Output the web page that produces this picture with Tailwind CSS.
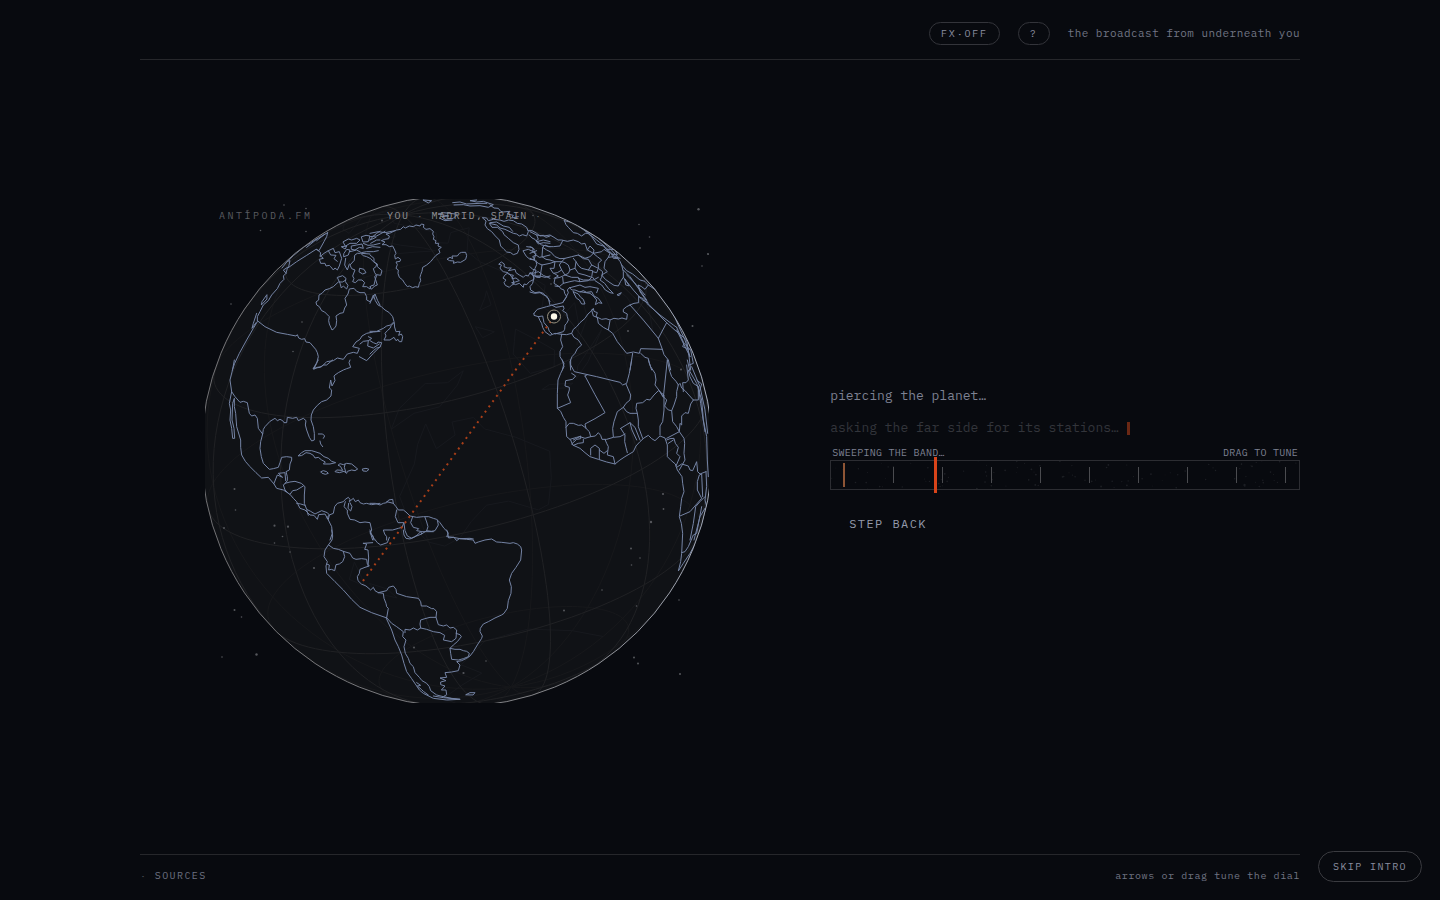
<!DOCTYPE html>
<html lang="en">
<head>
<meta charset="utf-8">
<meta name="viewport" content="width=device-width, initial-scale=1">
<title>Antípoda.fm</title>
<script src="https://cdn.jsdelivr.net/npm/@tailwindcss/browser@4"></script>
</head>
<body class="flex min-h-screen flex-col bg-[#080a0f] font-['IBM_Plex_Mono','Liberation_Mono',monospace] text-[#7d8192]">
<header class="mx-auto flex w-full max-w-[1160px] items-center justify-end gap-[18px] border-b border-[#26272b] pt-[22px] pb-[14px]">
  <button type="button" class="rounded-full border border-[#33343a] px-[11px] text-[10px] leading-[21px] tracking-[0.18em] text-[#8b8fa0]">FX·OFF</button>
  <button type="button" aria-label="Help" class="rounded-full border border-[#33343a] px-[11px] text-[10px] leading-[21px] tracking-[0.18em] text-[#8b8fa0]">?</button>
  <p class="pb-0.5 text-[11px] leading-4 tracking-[0.04em] text-[#717584]">the broadcast from underneath you</p>
</header>

<main class="mx-auto grid w-full max-w-[1160px] flex-1 grid-cols-[1.35fr_1fr] items-center gap-14 pb-3">
  <section class="relative mx-auto w-full max-w-[504px]" aria-label="Globe">
    <svg viewBox="205 199 504 504" class="block w-full" fill="none" role="img" aria-label="Line through the planet from Madrid">
      <defs>
        <linearGradient id="rim" x1="0" y1="0.6" x2="1" y2="0.4">
          <stop offset="0" stop-color="#707073"/><stop offset="0.6" stop-color="#85868a"/><stop offset="1" stop-color="#a9b0c0"/>
        </linearGradient>
        <clipPath id="disc"><circle cx="457" cy="451" r="255.5"/></clipPath>
      </defs>
      <circle cx="457" cy="451" r="255.5" fill="#101216"/>
      <path id="far-grid" stroke="#17181b" stroke-width="1"/>
      <path id="far-land" stroke="#17191e" stroke-width="1" stroke-linejoin="round"/>
      <path id="near-grid" stroke="#202124" stroke-width="1"/>
      <g clip-path="url(#disc)">
      <g stroke="#7585a6" stroke-width="3" stroke-linejoin="round" stroke-linecap="round">
        <!-- north-west: Alaska, Canada, Hudson Bay -->
        <g transform="translate(200 190) scale(.33333)">
          <path d="M383 128 345 150 310 172 280 197 262 214 246 234M383 128 380 140 372 155 357 182 348 178 320 196 290 215 262 235 258 250 250 258 252 268 240 280 232 296 215 315 205 332 190 345 180 365 172 380 172 395 160 415 140 450 118 490 104 520 97 540M262 214 270 212 266 230 250 240 258 250M350 152 375 132M320 172 352 146M200 315 186 335 184 345 200 328ZM170 370 160 400 156 415 168 398"/>
          <path d="M172 392 195 410 230 427 262 433 288 438 292 434 296 444 305 448 314 446 318 456 330 458 347 478 352 488 355 500 350 520 341 538 352 532 365 530 380 515 400 512 412 504 430 508 442 492 460 487 472 490 478 475 458 470 468 456 480 448 486 438 500 430 520 426 540 424M480 462 490 454 505 452 515 445 505 440M505 452 503 468 520 474 538 462M540 470 520 490 500 512 478 500"/>
          <path d="M437 270 428 276 415 276 400 290 388 296 375 300 366 310 357 315 356 330 348 336 350 345 358 350 365 362 374 366 380 372 388 380 386 392 388 402 396 420 402 416 408 408 410 392 408 378 420 370 430 368 434 354 440 345 435 325 444 312 448 297 462 295 470 304 480 308 494 308 500 320 500 330 510 335 518 326 525 312 533 332 540 345"/>
          <path d="M465 195 472 190 482 190 490 197 500 200 512 206 520 215 530 222 528 230 520 236 524 248 530 256 526 268 522 285 512 288 510 297 500 290 488 290 494 278 486 270 475 270 466 278 458 275 462 266 458 258 465 240 455 236 450 225 462 212ZM480 235 492 238 498 248 488 252 478 246Z"/>
          <path d="M350 178 362 188 360 200 372 190 385 182 400 175 405 188 418 185 425 205 418 228 412 240 405 234 400 240 392 230 388 226 378 228 375 220 362 220 358 208 370 205 362 198M385 182 392 195 408 196 402 206 412 214M413 262 428 257 438 265 436 275 444 286 440 297 430 288 424 294 420 280ZM432 200 445 195 450 180 440 178 432 190ZM437 205 434 225 442 240 448 222"/>
          <path d="M430 155 445 147 455 150 470 145 480 150 470 160 450 160 437 168ZM455 168 470 165 486 162 490 175 478 172 465 180 455 178ZM485 140 498 136 510 138 505 155 490 156ZM510 150 518 140 530 130 540 124M512 160 530 150 540 150M490 160 504 166 520 165 540 160M450 185 470 180 484 188 500 185 520 185 535 182M500 175 518 170 540 172M485 190 510 192M425 170 440 168 436 176Z"/>
        </g>
        <!-- north Atlantic -->
        <g transform="translate(370 190) scale(.33333)">
          <path d="M80 120 92 118 100 110 106 114 118 108 130 110 138 105 150 108 154 102 162 104 160 112 168 118 180 116 190 124 188 132 192 140 190 148 198 152 196 160 206 160 204 168 214 172 206 178 210 188 198 196 190 205 182 215 170 225 158 232 156 244 152 254 150 262 152 272 148 280 145 292 136 290 128 293 118 288 112 290 104 280 98 270 88 262 84 250 85 240 78 235 82 224 78 216 90 214 92 208 84 202 76 207 74 196 78 190 74 180 68 168 58 170 48 164 36 164 45 156 34 152 44 148 56 146 58 138 48 132 58 130Z"/>
          <path d="M232 207 240 202 248 206 246 198 262 198 268 190 275 187 287 187 290 197 287 208 272 217 262 216 250 220 252 213 240 212ZM205 72 220 68 240 70 262 73 250 85 225 88 215 80 235 78ZM160 30 185 32 176 38ZM208 84 225 92 246 90M248 38 270 36 290 42 330 40 350 40M252 45 280 44 300 48 330 47 355 52 370 44 340 34 320 36 300 32 320 30M360 45 372 54 385 55 392 64 400 66 420 64 412 72 430 76 425 84 445 80"/>
          <path d="M338 83 350 84 355 92 370 88 390 90 402 94 416 90 430 92 442 100 455 102 470 112 475 125 470 138 458 134 448 138 440 132 430 130 405 118 390 114 380 105 358 100 366 112 382 112 398 125 402 134 415 145 430 158 445 165 447 178 442 190 430 194 422 188 410 186 402 178 392 168 388 150 376 138 365 125 352 116 345 105 348 94ZM360 98 380 96 400 108 418 112 428 124M475 122 486 122 500 130 510 138 520 136 528 142 540 138M478 135 486 144 495 148 505 162 520 158 540 160M500 155 520 150 540 155"/>
          <path d="M460 182 475 178 490 185 498 195 488 200 495 210 480 208 470 200ZM498 195 508 202 520 200 540 195M470 170 485 172 494 180M387 222 394 216 403 222 402 230 412 234 424 234 415 242 435 238 438 248 448 255 460 262 466 256 475 258 480 248 488 250 492 268 478 275 470 284 462 282 460 292 448 280 436 284 425 278 436 276 448 272 438 264 426 266 430 256 420 254 414 248 400 245 394 240 390 234 394 226ZM405 255 412 250 420 254 428 265 430 272 432 282 424 286 418 292 406 286 402 278 408 270 400 265Z"/>
          <path d="M498 212 500 224 495 235 490 244 485 250 492 262 488 280 480 290 482 300 495 308 508 306 520 310 528 320 535 325 540 345M496 258 510 258 525 262 540 258M488 250 505 245 520 256 540 265M0 340 10 315 16 332 24 345 34 350 45 360 58 368 68 380 72 395 62 405 50 408 40 415 20 424 0 424M72 398 64 406 60 415 52 422 45 430 48 438 42 450 60 450 72 442 78 452 84 448 88 455 95 455 98 440 94 432 86 436 90 424 78 425 74 412ZM0 452 10 458 20 462 24 456 35 458 30 472 20 474 10 482 0 492M0 195 12 205 12 216 22 222 22 230 36 242 32 256 20 254 14 260 22 285 14 288 4 298 0 290M0 130 25 125 45 128 75 122M0 140 20 138 45 124M0 150 18 142"/>
        </g>
        <!-- Europe, Middle East -->
        <g transform="translate(530 190) scale(.33333)">
          <path d="M12 370 22 358 50 350 65 346 98 338 110 320 104 310 102 300 92 296 88 290 75 288M12 370 12 376 25 380 30 392 35 400 38 412 45 425 60 436 75 430 95 433M65 345 78 352 90 350 100 348 102 356 98 362 110 370 112 380 115 390 110 400 105 405 104 418 100 425 75 432M25 380 38 378 42 398 54 412 58 424 66 432M0 306 14 310 30 308 40 314 50 318 60 335"/>
          <path d="M0 125 20 135 42 138 60 135 72 142 84 150 95 150 112 154 130 150 145 155 155 162 165 160 172 180 190 190 180 200 165 205 145 195 125 200 105 205 90 206 75 200 62 186 50 180 38 172 45 165 55 170 70 170 90 168 98 152M20 135 25 148 18 152 35 165 60 170M38 172 36 200 48 208 60 210 75 215 95 215 105 205M0 170 10 175 8 184 18 190 12 210 0 205M12 210 25 220 36 225 60 220 75 215 72 235 60 235 70 250 82 248 95 240 88 225 95 215M95 240 105 255 115 250 120 240 115 225 105 218 95 215M105 255 90 262 75 265 72 280 88 290 100 280 98 262M105 255 125 262 145 262 150 275 134 272 120 275 100 280M120 240 135 235 138 215 130 205M138 215 146 228 155 235 175 240 185 225 175 208 160 206 145 195M135 235 145 250 165 255 185 262 175 272 150 275M185 262 188 242 175 240M185 225 205 235 200 248 188 245M145 265 160 270 190 270 205 262M0 230 8 238 18 240 14 258 30 262 36 225M0 190 20 182M0 250 20 262 30 262M72 265 85 258 72 250"/>
          <path d="M103 92 108 104 115 112 130 128 142 130 155 138 166 130 175 130 200 150 225 170 255 200 270 205M103 92 130 98 165 122 200 140 240 175 262 200M165 122 185 140 200 162 220 168 235 185 250 195M170 118 215 145 240 165M172 180 180 168 192 180 190 190 215 185 222 178 240 190 235 202 250 200 262 205 270 214 275 225 280 245 280 262 272 274 265 288 252 286 240 278 226 268 215 255 232 245 222 235 225 215 235 202M190 190 202 200 215 210 205 220 205 235 218 245 215 262 210 270 224 280 235 295 250 310 240 308 226 300 215 285 195 272 188 262M262 314 274 308 268 316ZM232 178 255 178 262 195 245 192 250 205 265 205"/>
          <path d="M118 293 126 300 135 300 150 306 160 302 170 307 185 305 192 318 205 325 216 340 206 338 196 344 200 330 190 318 180 310 150 305M118 293 112 300 115 308 108 322 98 338M130 305 145 312 152 322 160 328 165 342 155 342 148 330 140 325ZM120 293 150 285 165 292 180 290 205 295 200 308M285 268 298 288 288 285ZM275 225 290 242 308 252 330 270 345 274 355 285 345 298 335 290 325 285 330 305 355 340 335 328 310 300 280 262M280 240 300 260 350 330M290 255 320 285 345 315"/>
          <path d="M326 320 340 326 355 345 390 375 430 405 440 412M300 345 312 340 326 338 326 320M355 285 385 305 420 345 440 395 465 450 480 500"/>
          <path d="M95 433 110 434 125 430 130 418 140 410 150 398 165 385 174 372 185 362 190 355 192 364 202 368 198 380 215 388 228 386 240 390 252 385 265 387 276 384 290 388 292 372 280 366 280 358 290 350 300 345M300 345 340 390 385 445 410 398 355 342M385 445 397 478 332 476 328 490 310 486 290 490 262 455 248 430 235 420 240 392M185 360 190 378 202 382 205 400 220 412 235 420M308 490 300 540M332 490 345 502 355 505 358 520 365 540M397 478 402 494 415 510 422 540M125 430 132 442 145 450 155 465 142 476 135 490 126 500 120 515 122 540M95 433 92 450 98 470 90 484 90 500 102 520 97 540M410 398 440 425 470 450 476 490 482 540M440 412 462 460 458 470 478 478M440 420 480 500M462 460 482 480 490 520 478 525"/>
        </g>
        <!-- North and Central America, Caribbean -->
        <g transform="translate(200 360) scale(.33333)">
          <path d="M103 0 98 28 90 60 95 95 88 130 92 150 90 180 95 205 98 235 104 235 102 205 96 180 98 130 103 115 103 140 107 160 110 200 122 240 122 262 125 285 136 304 150 320 168 338 185 354 205 352 222 372M95 95 105 110 120 127 130 124 142 128 148 160 155 168 165 165 172 175 175 205 188 222 190 208 195 200 210 184 225 175 232 182 240 178 248 182 252 188 260 188 262 172 278 175 290 172 295 182 310 175 318 182 316 195 320 210 328 232 335 243 343 240 343 220 340 200 333 180 334 165 340 150 352 136 365 125 380 120 393 108 395 90 388 84 392 60 396 78 405 62 402 48 405 45 415 38 430 30 440 26 452 22 447 8 450 0"/>
          <path d="M188 222 182 245 180 265 184 290 190 310 208 328 220 326 235 322 240 308 245 292 260 290 275 292 275 300 270 312 268 330 258 335 262 350 262 362 252 374M222 370 232 345 248 352 235 340 255 338 257 362M222 372 230 385 250 390 270 403 280 415 290 425 300 445 315 450 330 465 342 466 352 478 356 464 375 462 385 480 395 500 397 520 390 540M255 370 270 366 285 364 304 370 315 380 313 405 313 430 320 448 332 454 345 462 365 452 382 458 388 465 380 474M250 375 255 390 265 400M270 403 278 392 290 390 310 378M290 430 302 432 315 436M320 450 325 466"/>
          <path d="M295 287 305 278 315 272 335 272 348 276 360 280 372 290 385 295 395 304 407 308 390 312 370 312 376 306 365 300 355 292 345 294 340 286 330 280 318 278 306 286ZM415 315 420 311 430 314 440 310 455 312 473 327 465 332 455 330 442 334 440 340 432 334 418 338 405 335 410 330 428 331 422 320ZM435 313 433 322 437 335M488 327 498 325 507 328 500 334 490 333ZM363 335 370 332 380 335 385 340 376 343 367 340ZM355 222 368 222 374 228 370 235M360 243 362 252 368 260M340 25 355 0M340 25 360 22 370 15 380 15 398 0"/>
          <path d="M385 478 388 465 400 460 404 440 412 430 430 425 436 418 445 412 450 418 448 425 460 415 466 425 475 420 480 428 490 432 500 430 515 434 540 430M436 425 432 440 442 450 442 460 450 478 464 480 480 488 495 486 510 488 515 510 510 520 518 526 522 540M446 430 444 445 452 453 456 440 450 428"/>
        </g>
        <!-- Guianas -->
        <g transform="translate(370 360) scale(.33333)">
          <path d="M0 430 16 430 30 435 40 430 50 428 56 420 68 418 70 430 50 425M70 430 78 440 85 450 100 450 108 456 120 468 140 472 160 470 176 470 190 475 200 478 210 488 222 505 232 515 236 534 250 532 270 536 300 535 310 537M80 450 76 470 84 488 102 488 96 502 85 505 68 510 40 510 44 522 50 530 50 540M102 490 105 512 112 528 125 535 140 528 155 522 152 514 140 512 146 506 130 502 122 488 128 470M165 472 170 486 174 500 170 512 155 522M202 480 205 495 195 512 184 514 170 512M0 515 8 540"/>
        </g>
        <!-- Africa -->
        <g transform="translate(530 360) scale(.33333)">
          <path d="M97 0 102 20 92 40 84 60 82 100 82 145 92 154 100 172 108 185 108 200 110 230 122 240 128 255 150 265 165 278 180 290 205 298 230 306 255 312 270 300 285 290 310 275 318 258 330 245 342 234 355 226 365 236 375 242 390 228 405 234 412 255 412 290 424 302 436 312 442 330 456 350 458 370 462 395 455 415 452 440 448 470 454 490 458 520 455 580 452 605 445 633 460 610 480 580 505 535 520 480 532 440"/>
          <path d="M122 0 122 15 133 35 200 50 270 67 278 75 290 70 298 40 305 0M125 40 137 48 128 58 107 62 105 78 118 82 118 90 113 105 122 128 82 145M165 48 195 104 225 158 195 176 165 192 168 205M165 48 172 44M108 202 118 190 130 190 145 196 155 195 165 202 178 215 182 230 165 235 150 230 140 232 120 238M125 252 140 238 152 236 152 228 130 240M182 230 196 228 205 218 212 226 216 238 230 238 250 232 270 230 285 222M250 230 248 205 252 185 262 155 280 142 288 130 300 120 302 105 288 72M280 142 290 155 300 160 322 160 325 180 325 200 338 235M272 205 300 188 315 202 330 240M272 205 285 225 284 245 288 262 292 278M300 188 306 210 320 240M322 160 318 145 320 130 338 128 350 118 360 120 372 105 385 92 402 105 402 150 398 185 390 198 390 225M225 238 230 250 235 260 232 285 250 290 255 312M182 285 182 265 195 255 208 265 208 298M208 270 222 280 232 272M130 256 145 250 160 248 160 238"/>
          <path d="M355 0 362 20 375 40 378 60 375 75 388 92 398 108 410 120 404 138 415 150 425 152 428 185 440 200 448 215 410 235M388 92 400 112 412 0M412 0 418 30 425 50 438 64 445 75 440 95 440 110 432 135 425 152M445 75 450 70 455 84 465 92 490 120 482 132 475 160 465 158 455 168 455 195 450 190 448 215 462 235 464 250 462 280 465 300 448 330M460 95 458 68 468 68 475 60 470 15M410 240 420 236 432 235 436 250 445 262 440 280 450 290 438 318M415 250 430 240M440 322 455 312 475 318 480 330 488 332 500 305 503 335 510 342 528 335M490 120 505 120 505 80 490 70 480 50 475 30M450 468 480 455 500 432 515 415 502 390 502 365 508 345 515 342 518 410M480 540 490 490 497 440 510 425 525 410M455 578 465 575 475 560 490 525 500 520 515 440M492 540 510 470 525 445"/>
          <path d="M472 0 480 35 500 70 515 120 520 180 530 230 532 300 535 350M485 20 510 80 525 150 533 220M505 80 512 130 525 215M528 335 530 380 525 420 530 440M500 60 515 72 508 95"/>
        </g>
        <!-- South America -->
        <g transform="translate(300 530) scale(.33333)">
          <path d="M440 0 445 10 440 20 462 22 470 32 478 26 500 28 520 30 525 40 535 36 555 30 575 27 590 36 605 37 630 40 640 38 652 42 662 50 665 60 662 90 648 112 635 130 628 150 634 170 633 190 625 212 622 235 612 250 605 255 585 264 565 275 550 282 541 295 540 305 547 318 545 325 532 345 520 365 510 378 500 385 485 392 470 395 480 405 475 422 455 426 435 428 440 442 420 444 438 452 422 456 422 464 435 468 424 480 438 480 440 494 430 500 455 505 480 508"/>
          <path d="M95 0 98 18 96 30 85 45 75 60 72 80 82 95 78 108 80 130 105 155 130 180 155 208 180 232 215 248 258 263 275 300 285 330 295 350 305 375 312 400 320 425 335 446 350 468 358 480 370 490 400 505 440 510 480 508 430 503 400 498M260 263 275 280 290 290 310 305 308 320 318 330 312 350 316 370 325 385 330 400 340 410 345 428 358 442 366 452 380 460 388 470 392 482 410 495 430 500M350 458 362 466 352 468 364 478 370 484 385 495"/>
          <path d="M86 45 100 55 115 58 130 64 134 80 128 95 118 102 108 104 104 122 94 118 86 120 88 105 80 102M130 64 150 70 158 84 168 88 185 86 200 88 202 102 208 108 195 112 180 118 178 130 172 140 174 152 184 162 198 168 212 180 220 172 225 182 235 188 250 190 252 205 258 220 260 230 265 235 260 263M190 40 200 42 194 58 204 60 206 84 204 108M190 40 218 38M210 0 215 14 222 25 232 38 242 45 262 38 268 22M235 188 260 182 266 172 280 168 288 178 290 190 320 200 355 205 362 215 364 228 380 228 395 236 402 236 410 245 408 262 390 262 375 266 362 270 360 282 362 294 352 300 340 294 330 300 315 298 315 308"/>
          <path d="M362 294 380 298 400 305 420 308 434 316 430 330 455 335 468 325 470 300 460 292 450 294 440 285 430 288 415 284 408 262M450 355 452 370 455 388 475 390 490 386 505 380 508 370 500 364 490 362 480 358 465 358 450 355 460 345 472 335 484 320 480 314 468 310M310 0 312 15 318 25 330 27 344 20 352 15 362 5 400 5M498 494 510 488 525 488 520 494Z"/>
        </g>
      </g>
      </g>
      <circle cx="457" cy="451" r="255.5" stroke="url(#rim)" stroke-width="1"/>
      <g id="stars" fill="#55575c"></g>
      <path d="M363 581 551 321" stroke="#a83f19" stroke-width="2" stroke-dasharray="2 4.5"/>
      <circle cx="554" cy="316.500" r="6.5" fill="#101216" stroke="#98917f" stroke-width="1"/>
      <circle cx="554" cy="316.500" r="3.200" fill="#fffbea"/>
    </svg>
    <div class="absolute top-[11px] left-[14px] text-[10px] leading-3 tracking-[0.25em] text-[#5a5b60]">ANTÍPODA.FM</div>
    <div class="absolute top-[11px] left-[182px] text-[10px] leading-3 tracking-[0.14em] text-[#939396]">YOU <span class="text-[#55565a]">·</span> MADRID, SPAIN <span class="text-[#55565a]">·</span></div>
  </section>

  <section class="pt-[26px]" aria-label="Tuner">
    <p class="text-[13px] leading-5 text-[#7d8192]">piercing the planet…</p>
    <p class="mt-3 flex items-center gap-2 text-[13px] leading-5 text-[#33353b]">asking the far side for its stations…<span class="h-[13px] w-[3px] bg-[#6b2814]"></span></p>
    <div class="mt-[9px] flex justify-between px-[2px] text-[10px] leading-3 tracking-wide text-[#7d8192]">
      <label for="dial">SWEEPING THE BAND…</label><span>DRAG TO TUNE</span>
    </div>
    <div class="relative mt-px h-[30px] border border-[#2c2d32]">
      <svg class="absolute inset-0 h-full w-full" viewBox="0 0 468 28" preserveAspectRatio="none" aria-hidden="true"><g id="static" fill="#1d1f24"></g></svg>
      <div class="relative flex h-full items-center justify-between pr-[13px] pl-3">
        <span class="h-6 w-[2px] bg-[#8e5535]"></span><span class="h-4 w-px bg-[#4a4b4f]"></span><span class="h-4 w-px bg-[#4a4b4f]"></span><span class="h-4 w-px bg-[#4a4b4f]"></span><span class="h-4 w-px bg-[#4a4b4f]"></span><span class="h-4 w-px bg-[#4a4b4f]"></span><span class="h-4 w-px bg-[#4a4b4f]"></span><span class="h-4 w-px bg-[#4a4b4f]"></span><span class="h-4 w-px bg-[#4a4b4f]"></span><span class="h-4 w-px bg-[#4a4b4f]"></span>
      </div>
      <span class="absolute -top-1 left-[22%] h-9 w-[3px] bg-[#d8441a]"></span>
      <input id="dial" type="range" min="0" max="100" value="22" class="absolute inset-0 h-full w-full cursor-ew-resize opacity-0">
    </div>
    <button type="button" class="mt-4 border border-transparent px-[18px] text-[12px] leading-[34px] tracking-[0.12em] text-[#949aab]">STEP BACK</button>
  </section>
</main>

<footer class="mx-auto flex h-[46px] w-full max-w-[1160px] items-center justify-between border-t border-[#26272b] pb-1 text-[10px] leading-4">
  <button type="button" class="tracking-[0.14em] text-[#6e7282]"><span class="text-[#45474e]">·</span> SOURCES</button>
  <p class="tracking-[0.06em] text-[#717584]">arrows or drag tune the dial</p>
</footer>
<button type="button" class="fixed right-[18px] bottom-[18px] rounded-full border border-[#3a3b40] bg-[#080a0f] px-[14px] text-[10px] leading-[29px] tracking-[0.14em] text-[#8b8fa0]">SKIP INTRO</button>

<script>
const R = 255.5, CX = 457, CY = 451, rad = Math.PI / 180;
const lat0 = 18.6 * rad, lon0 = -43.6 * rad, roll = 12.9 * rad;
// Orthographic projection; the third value is the depth (positive faces the viewer).
function project(lat, lon) {
  const a = lat * rad, b = lon * rad - lon0;
  const x = Math.cos(a) * Math.sin(b);
  const y = Math.sin(a) * Math.cos(lat0) - Math.cos(a) * Math.cos(b) * Math.sin(lat0);
  const z = Math.sin(a) * Math.sin(lat0) + Math.cos(a) * Math.cos(b) * Math.cos(lat0);
  return [CX + R * (x * Math.cos(roll) - y * Math.sin(roll)), CY - R * (x * Math.sin(roll) + y * Math.cos(roll)), z];
}
function trace(lines, near) {
  let d = '';
  for (const line of lines) {
    let pen = false;
    for (const [la, lo] of line) {
      const [x, y, z] = project(la, lo);
      if ((z >= 0) === near) { d += (pen ? 'L' : 'M') + x.toFixed(1) + ' ' + y.toFixed(1); pen = true; } else pen = false;
    }
  }
  return d;
}
const grid = [];
for (let lo = -180; lo < 180; lo += 30) { const l = []; for (let la = -90; la <= 90; la += 3) l.push([la, lo]); grid.push(l); }
for (let la = -60; la <= 60; la += 30) { const l = []; for (let lo = -180; lo <= 180; lo += 3) l.push([la, lo]); grid.push(l); }
document.getElementById('near-grid').setAttribute('d', trace(grid, true));
document.getElementById('far-grid').setAttribute('d', trace(grid, false));
const land = [
  [[-11,142],[-17,141],[-15,136],[-12,136],[-12,131],[-15,129],[-18,122],[-22,114],[-28,114],[-34,115],[-35,118],[-32,126],[-32,132],[-35,137],[-38,141],[-39,146],[-37,150],[-32,153],[-25,153],[-19,147],[-15,145],[-11,142]],
  [[-35,173],[-38,178],[-41,175],[-39,174],[-35,173]],[[-41,173],[-44,173],[-47,168],[-44,169],[-41,173]],
  [[-1,131],[-3,135],[-2,140],[-6,147],[-10,150],[-8,144],[-8,138],[-4,133],[-1,131]],
  [[7,117],[4,118],[1,119],[-4,116],[-3,110],[1,109],[4,113],[7,117]],[[6,95],[2,99],[-3,104],[-6,105],[-2,101],[6,95]],[[-7,106],[-7,112],[-8,114],[-8,108],[-7,106]],
  [[18,121],[14,121],[13,124],[16,122],[18,121]],[[9,126],[6,125],[7,122],[9,126]],
  [[8,77],[13,75],[19,73],[23,69],[25,66],[25,60],[27,56],[30,49]],[[8,77],[10,80],[16,82],[20,87],[22,91],[16,94],[16,97],[9,98],[2,103],[7,101],[13,100],[9,105],[12,109],[18,106],[21,109],[22,114],[27,120],[31,122],[36,120],[40,118],[39,124],[35,126],[36,129],[40,128],[43,132],[49,140],[54,141],[55,136],[59,143],[60,155],[51,157],[56,162],[60,164],[62,175],[66,-172],[69,178],[70,160],[72,140],[73,115],[77,105],[73,80]],
  [[33,130],[34,135],[35,140],[40,142],[38,139],[35,133],[33,130]],[[42,140],[45,142],[43,145],[42,140]],[[-23,44],[-16,45],[-12,49],[-18,49],[-25,46],[-23,44]],
  [[-66,60],[-67,90],[-66,120],[-67,145],[-72,170],[-78,165],[-78,-160],[-74,-120],[-73,-90]]
];
document.getElementById('far-land').setAttribute('d', trace(land, false));
const dots = (id, list) => document.getElementById(id).innerHTML = list.map(([x, y, r]) => `<circle cx="${x}" cy="${y}" r="${r || .8}"/>`).join('');
dots('stars', [[698.5,209.3,1.2],[708,254,1.1],[702,266],[640,248,.9],[649.5,237],[639,224.5],[692.5,326,1],[628,331,1],[681,369.5,1],[551,284],[284,205],[306,208.5],[260.5,230.5],[306,231.5],[231,304],[302,322],[293,351.5],[234.5,489,1],[235.5,510],[224,528,1],[274.5,525.7,1.1],[288,526.7,1.1],[282.5,536.5],[274.5,543],[290,552],[314,568,1.1],[234.5,610,1],[241.5,617],[256.5,654.5,1.2],[222,657],[663,494,1.1],[663.5,509,.9],[651,522,1.2],[631,548.5,1],[640,558],[631.5,565],[602,590],[636.5,606],[564,610.5,1],[634,657.5,1],[638,663.5,1],[680,674,1],[414,647.5,1],[463.5,673,1.1],[486,661],[679,600],[533,215.5],[382,220.5,1],[247,211]]);
let s = 7;
const rnd = () => (s = s * 16807 % 2147483647) / 2147483647;
dots('static', Array.from({ length: 110 }, () => [rnd() * 468, rnd() * 28, .4 + rnd() * .5].map(v => v.toFixed(1))));
</script>
</body>
</html>
